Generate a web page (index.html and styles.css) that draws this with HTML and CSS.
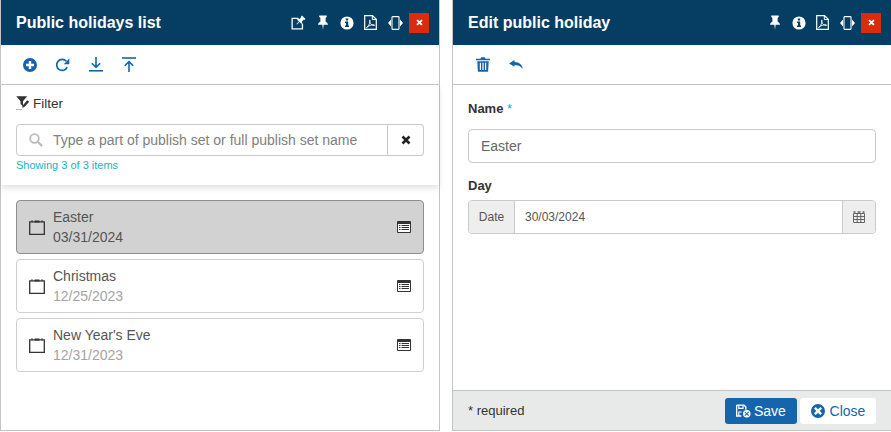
FILE: index.html
```html
<!DOCTYPE html>
<html lang="en">
<head>
<meta charset="utf-8">
<title>Public holidays</title>
<link rel="stylesheet" href="styles.css">
</head>
<body>
<svg class="defs" width="0" height="0" aria-hidden="true">
  <defs>
    <symbol id="i-share" viewBox="0 0 16 16"><path d="M8 3.5H1.2v11.3h11V9" fill="none" stroke="currentColor" stroke-width="1.4"/><path d="M11.7.6l3.8 3.7-1 .9-.8-.3-2 2 .1 1.8-.8.7-2-2-2.6 2.6-.6-.5 2.6-2.7-2-2 .8-.7 1.8.1 2-2-.3-.8z" fill="currentColor"/></symbol>
    <symbol id="i-pin" viewBox="0 0 12 16"><path d="M2 .6h8v1.5L8.8 3v4.3c1.4.6 2.4 1.7 2.5 3.1H6.7L6 15.6l-.7-5.2H.7c.1-1.4 1.1-2.5 2.5-3.1V3L2 2.1z" fill="currentColor"/></symbol>
    <symbol id="i-info" viewBox="0 0 14 14"><path fill-rule="evenodd" d="M7 .4a6.6 6.6 0 1 1 0 13.2A6.6 6.6 0 0 1 7 .4zM5.8 2.4v2h2.4v-2zM5 5.6v1.3h1v2.7H5v1.3h4V9.6H8.2v-4z" fill="currentColor"/></symbol>
    <symbol id="i-pdf" viewBox="0 0 13 15"><path d="M.7.7h7.8l3.8 3.6v10H.7z" fill="none" stroke="currentColor" stroke-width="1.2"/><path d="M8.3.9v3.6h3.8" fill="none" stroke="currentColor"/><path d="M2.5 12.8c1.5-.8 2.8-3 3.5-6.3.2-1 .1-1.500-.2-1.500-.4 0-.4 1 0 2.200.7 1.800 2 3.100 4.300 3.300.8.100.6-.8-.3-.8-2.300 0-5.300 1-7 2.600z" fill="none" stroke="currentColor" stroke-width=".9"/></symbol>
    <symbol id="i-resize" viewBox="0 0 15 14"><path d="M0 7l3-3.500v7zM15 7l-3-3.500v7z" fill="currentColor"/><rect x="4" y=".6" width="7" height="12.800" rx=".6" fill="none" stroke="currentColor" stroke-width="1.100"/></symbol>
    <symbol id="i-plus" viewBox="0 0 14 14"><path fill-rule="evenodd" d="M7 0a7 7 0 1 1 0 14A7 7 0 0 1 7 0zM5.800 3v2.800H3v2.400h2.800V11h2.400V8.200H11V5.800H8.200V3z" fill="currentColor"/></symbol>
    <symbol id="i-refresh" viewBox="0 0 15 14"><path d="M12.200 9.200A5.500 5.500 0 1 1 11.300 3.300" fill="none" stroke="currentColor" stroke-width="1.700"/><path d="M14.300.6v5.600H8.700z" fill="currentColor"/></symbol>
    <symbol id="i-down" viewBox="0 0 14 15"><path d="M0 13.800h14" stroke="currentColor" stroke-width="1.600"/><path d="M7 0v10M2.800 6.200L7 10.400l4.200-4.200" fill="none" stroke="currentColor" stroke-width="1.600"/></symbol>
    <symbol id="i-up" viewBox="0 0 14 15"><path d="M0 1h14" stroke="currentColor" stroke-width="1.600"/><path d="M7 15V5M2.800 8.800L7 4.600l4.200 4.200" fill="none" stroke="currentColor" stroke-width="1.600"/></symbol>
    <symbol id="i-trash" viewBox="0 0 14 15"><path fill-rule="evenodd" d="M0 1.800h4.500L5 .3h4l.5 1.500H14v1.500H0zM1.300 4.200h11.400l-.6 10.500H1.900zM3.800 5.800v7.300h1.200V5.800zM6.400 5.800v7.300h1.200V5.800zM9 5.800v7.300h1.200V5.800z" fill="currentColor"/></symbol>
    <symbol id="i-back" viewBox="0 0 14 9" preserveAspectRatio="none"><path d="M5.500 0L0 3.400l5.500 3.400V5c3.300 0 5.800.8 8.200 4C13.300 5 10.500 2.200 5.500 2z" fill="currentColor"/></symbol>
    <symbol id="i-funnel" viewBox="0 0 14 14"><path d="M.3.300h10.900L7 5.200v5L4.500 8V5.200z" fill="#333"/><path d="M11.200 4.300l2 1.500-4.800 5.200-2.300.8.600-2.400z" fill="#333"/><path d="M.5 13.500h6" stroke="#777" stroke-dasharray="1 1"/></symbol>
    <symbol id="i-search" viewBox="0 0 14 14"><circle cx="5.500" cy="5.500" r="4.300" fill="none" stroke="currentColor" stroke-width="1.800"/><path d="M8.800 8.800l4.300 4.300" stroke="currentColor" stroke-width="2.200"/></symbol>
    <symbol id="i-x" viewBox="0 0 10 10"><path d="M1.500 1.500l7 7M8.500 1.500l-7 7" stroke="currentColor" stroke-width="2.600"/></symbol>
    <symbol id="i-cal" viewBox="0 0 16 16"><path d="M.7 2.800h14.600v12.500H.7z" fill="none" stroke="currentColor" stroke-width="1.300"/><path d="M5.500 2.500h5" stroke="currentColor" stroke-width="2"/><path d="M3 1v2.500M13 1v2.500" stroke="currentColor" stroke-width="1.200" stroke-opacity=".7"/></symbol>
    <symbol id="i-list" viewBox="0 0 14 12"><rect width="14" height="12" rx="1" fill="currentColor"/><rect x="1" y="3" width="12" height="8" fill="#fff"/><path d="M4.500 4.500h7.500M4.500 6.500h7.500M4.500 8.500h7.500M2 4.500h1.500M2 6.500h1.500M2 8.500h1.500" stroke="#333"/></symbol>
    <symbol id="i-grid" viewBox="0 0 12 12"><path d="M.5 2.500h11v9H.5zM.5 5.500h11M.5 8.500h11M4.200 2.500v9M7.800 2.500v9" fill="none" stroke="currentColor"/><path d="M.5 1h2M4.500 1h3M9.500 1h2" stroke="currentColor" stroke-width="1.500"/></symbol>
    <symbol id="i-save" viewBox="0 0 16 14"><path d="M.7.700h7.800l2 2v3M.7.700v11.600h5" fill="none" stroke="currentColor" stroke-width="1.400"/><path d="M3 1v3.200h4.500V1M3 12V8h3" fill="none" stroke="currentColor" stroke-width="1.200"/><path fill-rule="evenodd" d="M11.500 6a4 4 0 1 1 0 8 4 4 0 0 1 0-8zM9.800 7.600l-.8.800L10.700 10 9 11.600l.8.800 1.700-1.700 1.700 1.700.8-.8L12.300 10 14 8.400l-.8-.8L11.500 9.300z" fill="currentColor"/></symbol>
    <symbol id="i-xcircle" viewBox="0 0 14 14"><path fill-rule="evenodd" d="M7 0a7 7 0 1 1 0 14A7 7 0 0 1 7 0zM4.700 3L3 4.700 5.300 7 3 9.300 4.700 11 7 8.700 9.300 11 11 9.300 8.700 7 11 4.700 9.300 3 7 5.300z" fill="currentColor"/></symbol>
  </defs>
</svg>

<section class="panel panel-list">
  <header class="panel-head">
    <h1 class="panel-title">Public holidays list</h1>
    <div class="head-icons">
      <svg class="hi hi-share"><use href="#i-share"/></svg>
      <svg class="hi hi-pin"><use href="#i-pin"/></svg>
      <svg class="hi hi-info"><use href="#i-info"/></svg>
      <svg class="hi hi-pdf"><use href="#i-pdf"/></svg>
      <svg class="hi hi-resize"><use href="#i-resize"/></svg>
      <span class="close-box"><svg class="close-x"><use href="#i-x"/></svg></span>
    </div>
  </header>
  <div class="toolbar">
    <svg class="ti ti-plus"><use href="#i-plus"/></svg>
    <svg class="ti ti-refresh"><use href="#i-refresh"/></svg>
    <svg class="ti ti-down"><use href="#i-down"/></svg>
    <svg class="ti ti-up"><use href="#i-up"/></svg>
  </div>
  <div class="filter">
    <div class="filter-title"><svg class="funnel"><use href="#i-funnel"/></svg><span>Filter</span></div>
    <div class="search">
      <div class="search-field">
        <svg class="search-icon"><use href="#i-search"/></svg>
        <span class="placeholder">Type a part of publish set or full publish set name</span>
      </div>
      <div class="search-clear"><svg class="clear-x"><use href="#i-x"/></svg></div>
    </div>
    <div class="count">Showing 3 of 3 items</div>
  </div>
  <ul class="items">
    <li class="item item-active">
      <svg class="item-cal"><use href="#i-cal"/></svg>
      <div class="item-text"><div class="item-name">Easter</div><div class="item-date">03/31/2024</div></div>
      <svg class="item-list"><use href="#i-list"/></svg>
    </li>
    <li class="item">
      <svg class="item-cal"><use href="#i-cal"/></svg>
      <div class="item-text"><div class="item-name">Christmas</div><div class="item-date">12/25/2023</div></div>
      <svg class="item-list"><use href="#i-list"/></svg>
    </li>
    <li class="item">
      <svg class="item-cal"><use href="#i-cal"/></svg>
      <div class="item-text"><div class="item-name">New Year's Eve</div><div class="item-date">12/31/2023</div></div>
      <svg class="item-list"><use href="#i-list"/></svg>
    </li>
  </ul>
</section>

<section class="panel panel-edit">
  <header class="panel-head">
    <h1 class="panel-title">Edit public holiday</h1>
    <div class="head-icons">
      <svg class="hi hi-pin"><use href="#i-pin"/></svg>
      <svg class="hi hi-info"><use href="#i-info"/></svg>
      <svg class="hi hi-pdf"><use href="#i-pdf"/></svg>
      <svg class="hi hi-resize"><use href="#i-resize"/></svg>
      <span class="close-box"><svg class="close-x"><use href="#i-x"/></svg></span>
    </div>
  </header>
  <div class="toolbar toolbar-edit">
    <svg class="ti ti-trash"><use href="#i-trash"/></svg>
    <svg class="ti ti-back"><use href="#i-back"/></svg>
  </div>
  <form class="form">
    <div class="label label-name">Name <span class="req">*</span></div>
    <div class="input">Easter</div>
    <div class="label label-day">Day</div>
    <div class="date">
      <div class="date-addon">Date</div>
      <div class="date-value">30/03/2024</div>
      <div class="date-btn"><svg class="grid"><use href="#i-grid"/></svg></div>
    </div>
  </form>
  <footer class="foot">
    <span class="foot-note">* required</span>
    <div class="foot-btn btn-save"><svg class="btn-icon-save"><use href="#i-save"/></svg>Save</div>
    <div class="foot-btn btn-close"><svg class="btn-icon-close"><use href="#i-xcircle"/></svg>Close</div>
  </footer>
</section>
</body>
</html>
```
FILE: styles.css
```css
* { box-sizing: border-box; }
html, body { margin: 0; padding: 0; }
body {
  width: 891px; height: 432px; overflow: hidden;
  display: flex; gap: 12px; background: #fff;
  font-family: "Liberation Sans", Arial, sans-serif; color: #333;
}
.defs { position: absolute; }
.panel {
  flex: none; width: 440px; height: 431px;
  border: 1px solid #c4c4c4; border-top: 0;
  display: flex; flex-direction: column; background: #fff;
}
.panel-head {
  height: 45px; flex: none; margin: 0;
  background: #053e62; color: #fff;
  display: flex; align-items: center; justify-content: space-between;
  padding: 0 10px 0 15px;
}
.panel-title { margin: 0; font-size: 16px; font-weight: 700; color: #fff; }
.head-icons { display: flex; align-items: center; color: #fff; }
.hi { display: block; flex: none; }
.hi-share { width: 15px; height: 15px; margin-right: 11px; }
.hi-pin { width: 12px; height: 15px; margin-right: 11px; }
.hi-info { width: 14px; height: 14px; margin-right: 10px; }
.hi-pdf { width: 13px; height: 15px; margin-right: 11px; }
.hi-resize { width: 15px; height: 14px; margin-right: 6px; }
.close-box {
  width: 20px; height: 20px; background: #d92c0c;
  display: flex; align-items: center; justify-content: center;
}
.close-x { width: 7px; height: 7px; color: #fff; display: block; }
.toolbar {
  height: 40px; flex: none; border-bottom: 1px solid #c4c4c4;
  display: flex; align-items: center; padding: 0 0 0 22px; color: #1565ad;
}
.ti { display: block; flex: none; }
.ti-plus { width: 14px; height: 14px; margin-right: 18px; }
.ti-refresh { width: 15px; height: 14px; margin-right: 19px; }
.ti-down { width: 14px; height: 15px; margin-right: 19px; }
.ti-up { width: 14px; height: 15px; }
.toolbar-edit { padding-left: 23px; }
.ti-trash { width: 14px; height: 15px; margin-right: 19px; }
.ti-back { width: 14px; height: 9px; }
.filter {
  flex: none; height: 100px; padding: 10px 15px 0;
  box-shadow: 0 3px 6px rgba(0,0,0,.12); position: relative;
}
.filter-title { display: flex; align-items: center; font-size: 13.5px; height: 16px; color: #333; }
.funnel { width: 14px; height: 14px; margin-right: 3px; display: block; }
.search { display: flex; height: 32px; margin-top: 13px; }
.search-field {
  flex: 1; display: flex; align-items: center; padding-left: 12px;
  border: 1px solid #c8c8c8; border-radius: 4px 0 0 4px;
}
.search-icon { width: 14px; height: 14px; color: #bbb; margin-right: 10px; display: block; }
.placeholder { font-size: 14px; color: #808080; white-space: nowrap; }
.search-clear {
  width: 36px; border: 1px solid #c8c8c8; border-left: 0; border-radius: 0 4px 4px 0;
  display: flex; align-items: center; justify-content: center; color: #222;
}
.clear-x { width: 10px; height: 10px; display: block; }
.count { font-size: 11px; color: #19b3c5; margin-top: 3px; }
.items { list-style: none; margin: 15px 0 0; padding: 0 15px; display: flex; flex-direction: column; gap: 5px; }
.item {
  height: 54px; border: 1px solid #cfcfcf; border-radius: 4px;
  display: flex; align-items: center; padding: 0 12px;
}
.item-active { background: #d2d2d2; border-color: #8e8e8e; }
.item-cal { width: 16px; height: 16px; color: #333; display: block; margin-right: 8px; flex: none; }
.item-text { flex: 1; }
.item-name { font-size: 14px; line-height: 20px; color: #555; }
.item-date { font-size: 14px; line-height: 20px; color: #a4a4a4; }
.item-active .item-date { color: #555; }
.item-list { width: 14px; height: 12px; color: #333; display: block; flex: none; }
.form { flex: 1; padding: 16px 15px 0; }
.label { font-size: 13px; font-weight: 700; color: #333; line-height: 16px; }
.req { color: #39a0d0; font-weight: 400; }
.input {
  height: 34px; margin-top: 12px; border: 1px solid #cacaca; border-radius: 4px;
  font-size: 14px; color: #666; display: flex; align-items: center; padding-left: 12px;
}
.label-day { margin-top: 15px; }
.date { display: flex; height: 34px; margin-top: 6px; border: 1px solid #cacaca; border-radius: 4px; overflow: hidden; }
.date-addon {
  width: 46px; background: #eee; border-right: 1px solid #cacaca;
  font-size: 12px; color: #555; display: flex; align-items: center; justify-content: center;
}
.date-value { flex: 1; font-size: 12px; color: #555; display: flex; align-items: center; padding-left: 10px; }
.date-btn {
  width: 33px; background: #eee; border-left: 1px solid #cacaca;
  display: flex; align-items: center; justify-content: center; color: #666;
}
.grid { width: 12px; height: 12px; display: block; }
.foot {
  flex: none; height: 40px; background: #e8eaea; border-top: 1px solid #c4c4c4;
  display: flex; align-items: center; padding: 0 15px;
}
.foot-note { flex: 1; font-size: 13px; color: #333; }
.foot-btn {
  height: 26px; border-radius: 3px; font-size: 14px;
  display: flex; align-items: center;
}
.btn-save { width: 72px; background: #1565ad; color: #fff; padding-left: 11px; }
.btn-close { width: 76px; margin-left: 3px; background: #fff; color: #1565ad; justify-content: center; }
.btn-icon-save { width: 15px; height: 14px; margin-right: 3px; display: block; }
.btn-icon-close { width: 14px; height: 14px; margin-right: 5px; display: block; }
```
